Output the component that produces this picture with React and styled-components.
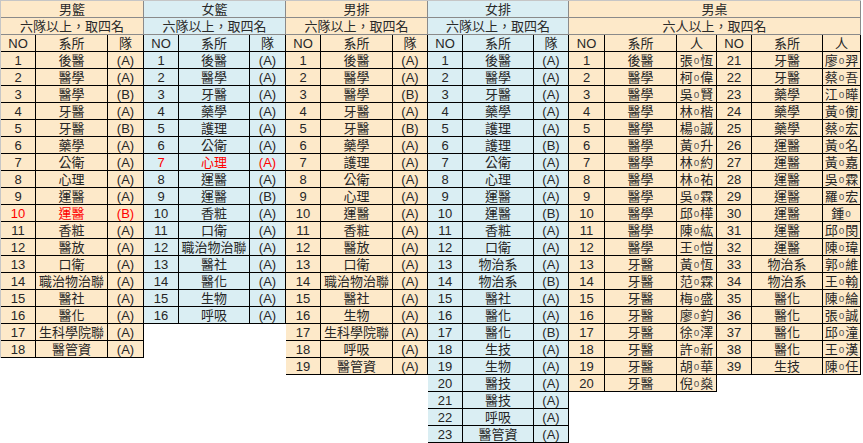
import React from 'react';
import styled, { createGlobalStyle } from 'styled-components';

const Global = createGlobalStyle`
  html, body { margin: 0; padding: 0; background: #fff; }
  body {
    font-family: "Liberation Sans", "Noto Sans CJK TC", sans-serif;
    font-size: 13px;
    color: #000;
  }
`;

const ORANGE = '#fde9c9';
const BLUE = '#daeef3';

const Sheet = styled.div`
  display: flex;
  align-items: flex-start;
  width: 863px;
  height: 443px;
  overflow: hidden;
`;

const Block = styled.div`
  display: grid;
  grid-template-columns: ${p => p.$cols};
  grid-auto-rows: 17px;
  border-top: 1px solid #c6c6c6;
  border-left: ${p => (p.$first ? '1px solid #c6c6c6' : 'none')};
`;

const Cell = styled.div`
  box-sizing: border-box;
  display: flex;
  align-items: center;
  justify-content: center;
  border-right: 1px solid #000;
  border-bottom: 1px solid #000;
  background: ${p => p.$bg};
  color: ${p => (p.$red ? '#ff0000' : '#262626')};
  white-space: nowrap;
  overflow: hidden;
  line-height: 1;
  padding-top: 1px;
`;

const Banner = styled(Cell)`
  grid-column: 1 / -1;
  border-bottom-color: #8a8a8a;
  border-right-color: #8a8a8a;
  color: #2a2a2a;
`;

const Blank = styled.div`
  background: #fff;
`;

const Dot = styled.span`
  font-family: "Liberation Sans", sans-serif;
  font-size: 10px;
  line-height: 1;
  color: #555;
  margin: 0 1px;
`;

const mbb = [
  ['後醫', 'A'], ['醫學', 'A'], ['醫學', 'B'], ['牙醫', 'A'], ['牙醫', 'B'], ['藥學', 'A'],
  ['公衛', 'A'], ['心理', 'A'], ['運醫', 'A'], ['運醫', 'B', true], ['香粧', 'A'], ['醫放', 'A'],
  ['口衛', 'A'], ['職治物治聯', 'A'], ['醫社', 'A'], ['醫化', 'A'], ['生科學院聯', 'A'], ['醫管資', 'A'],
];
const wbb = [
  ['後醫', 'A'], ['醫學', 'A'], ['牙醫', 'A'], ['藥學', 'A'], ['護理', 'A'], ['公衛', 'A'],
  ['心理', 'A', true], ['運醫', 'A'], ['運醫', 'B'], ['香粧', 'A'], ['口衛', 'A'], ['職治物治聯', 'A'],
  ['醫社', 'A'], ['醫化', 'A'], ['生物', 'A'], ['呼吸', 'A'],
];
const mvb = [
  ['後醫', 'A'], ['醫學', 'A'], ['醫學', 'B'], ['牙醫', 'A'], ['牙醫', 'B'], ['藥學', 'A'],
  ['護理', 'A'], ['公衛', 'A'], ['心理', 'A'], ['運醫', 'A'], ['香粧', 'A'], ['醫放', 'A'],
  ['口衛', 'A'], ['職治物治聯', 'A'], ['醫社', 'A'], ['生物', 'A'], ['生科學院聯', 'A'], ['呼吸', 'A'],
  ['醫管資', 'A'],
];
const wvb = [
  ['後醫', 'A'], ['醫學', 'A'], ['牙醫', 'A'], ['藥學', 'A'], ['護理', 'A'], ['護理', 'B'],
  ['公衛', 'A'], ['心理', 'A'], ['運醫', 'A'], ['運醫', 'B'], ['香粧', 'A'], ['口衛', 'A'],
  ['物治系', 'A'], ['物治系', 'B'], ['醫社', 'A'], ['醫化', 'A'], ['醫化', 'B'], ['生技', 'A'],
  ['生物', 'A'], ['醫技', 'A'], ['醫技', 'A'], ['呼吸', 'A'], ['醫管資', 'A'],
];
const mtt = [
  ['後醫', '張', '恆'], ['醫學', '柯', '偉'], ['醫學', '吳', '賢'], ['醫學', '林', '楷'],
  ['醫學', '楊', '誠'], ['醫學', '黃', '升'], ['醫學', '林', '約'], ['醫學', '林', '祐'],
  ['醫學', '吳', '霖'], ['醫學', '邱', '樺'], ['醫學', '陳', '紘'], ['醫學', '王', '愷'],
  ['牙醫', '黃', '恆'], ['牙醫', '范', '霖'], ['牙醫', '梅', '盛'], ['牙醫', '廖', '鈞'],
  ['牙醫', '徐', '澤'], ['牙醫', '許', '新'], ['牙醫', '胡', '華'], ['牙醫', '倪', '燊'],
  ['牙醫', '廖', '羿'], ['牙醫', '蔡', '吾'], ['藥學', '江', '曄'], ['藥學', '黃', '衡'],
  ['藥學', '蔡', '宏'], ['運醫', '黃', '名'], ['運醫', '黃', '嘉'], ['運醫', '吳', '霖'],
  ['運醫', '羅', '宏'], ['運醫', '鍾', ''], ['運醫', '邱', '閔'], ['運醫', '陳', '瑋'],
  ['物治系', '郭', '維'], ['物治系', '王', '翰'], ['醫化', '陳', '綸'], ['醫化', '張', '誠'],
  ['醫化', '邱', '潼'], ['醫化', '王', '漢'], ['生技', '陳', '任'],
];

function TeamTable({ title, cols, bg, rows, first }) {
  return (
    <Block $cols={cols} $first={first}>
      <Banner $bg={bg}>{title}</Banner>
      <Banner $bg={bg}>六隊以上，取四名</Banner>
      <Cell $bg={bg}>NO</Cell>
      <Cell $bg={bg}>系所</Cell>
      <Cell $bg={bg}>隊</Cell>
      {rows.map(([dept, team, red], i) => (
        <React.Fragment key={i}>
          <Cell $bg={bg} $red={red}>{i + 1}</Cell>
          <Cell $bg={bg} $red={red}>{dept}</Cell>
          <Cell $bg={bg} $red={red}>({team})</Cell>
        </React.Fragment>
      ))}
    </Block>
  );
}

function PlayerCells({ no, p, bg }) {
  return (
    <>
      <Cell $bg={bg}>{no}</Cell>
      <Cell $bg={bg}>{p[0]}</Cell>
      <Cell $bg={bg}>
        {p[1]}
        <Dot>o</Dot>
        {p[2]}
      </Cell>
    </>
  );
}

function TableTennis() {
  const bg = ORANGE;
  const left = mtt.slice(0, 20);
  const right = mtt.slice(20);
  return (
    <Block $cols="36px 72px 40px 35px 71px 38px">
      <Banner $bg={bg}>男桌</Banner>
      <Banner $bg={bg}>六人以上，取四名</Banner>
      <Cell $bg={bg}>NO</Cell>
      <Cell $bg={bg}>系所</Cell>
      <Cell $bg={bg}>人</Cell>
      <Cell $bg={bg}>NO</Cell>
      <Cell $bg={bg}>系所</Cell>
      <Cell $bg={bg}>人</Cell>
      {left.map((p, i) => (
        <React.Fragment key={i}>
          <PlayerCells no={i + 1} p={p} bg={bg} />
          {right[i] ? (
            <PlayerCells no={i + 21} p={right[i]} bg={bg} />
          ) : (
            <>
              <Blank />
              <Blank />
              <Blank />
            </>
          )}
        </React.Fragment>
      ))}
    </Block>
  );
}

export default function App() {
  return (
    <>
      <Global />
      <Sheet>
        <TeamTable title="男籃" cols="35px 72px 36px" bg={ORANGE} rows={mbb} first />
        <TeamTable title="女籃" cols="35px 71px 36px" bg={BLUE} rows={wbb} />
        <TeamTable title="男排" cols="35px 72px 35px" bg={ORANGE} rows={mvb} />
        <TeamTable title="女排" cols="35px 71px 35px" bg={BLUE} rows={wvb} />
        <TableTennis />
      </Sheet>
    </>
  );
}
